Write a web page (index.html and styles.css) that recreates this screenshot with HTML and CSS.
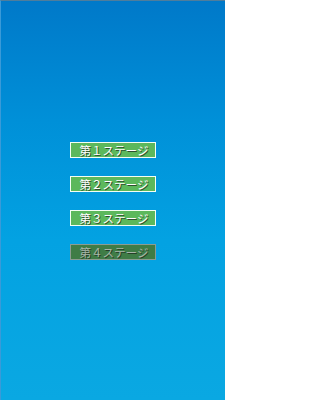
FILE: index.html
```html
<!DOCTYPE html>
<html lang="ja">
<head>
<meta charset="utf-8">
<link rel="stylesheet" href="styles.css">
</head>
<body>
<div class="screen">
  <div class="menu">
    <button class="stage">第１ステージ</button>
    <button class="stage">第２ステージ</button>
    <button class="stage">第３ステージ</button>
    <button class="stage locked">第４ステージ</button>
  </div>
</div>
</body>
</html>
```
FILE: styles.css
```css
html, body {
  margin: 0;
  padding: 0;
}
.screen {
  width: 225px;
  height: 400px;
  box-sizing: border-box;
  border-top: 1px solid #4f7d9c;
  border-left: 1px solid #3a9ad8;
  background: linear-gradient(to bottom, #0079c9 0%, #0090d8 30%, #03a2e2 60%, #0aa8e2 100%);
  display: flex;
  align-items: center;
  justify-content: center;
}
.menu {
  display: flex;
  flex-direction: column;
  align-items: center;
  gap: 18px;
  margin-left: -1px;
}
.stage {
  width: 86px;
  height: 16px;
  box-sizing: border-box;
  margin: 0;
  padding: 0 0 0 3px;
  border: 1px solid #f4fff4;
  background: #5cb85c;
  color: #ffffff;
  font-family: "Noto Sans CJK JP", sans-serif;
  font-size: 11.5px;
  line-height: 14px;
  text-shadow: 1px 1px 0 #2f4f2f;
  letter-spacing: 0;
  white-space: nowrap;
  overflow: hidden;
}
.stage.locked {
  background: #3f7c46;
  border-color: #8c9c92;
  color: #a7b5a8;
  text-shadow: 1px 1px 0 #263f28;
}
```
